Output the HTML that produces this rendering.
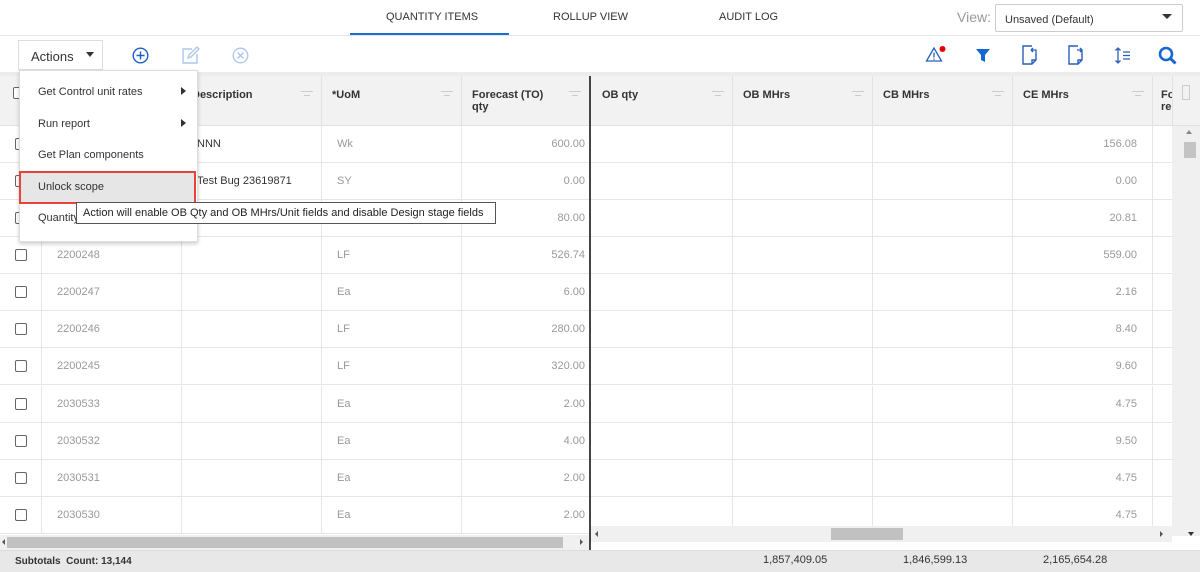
<!DOCTYPE html>
<html><head><meta charset="utf-8"><style>
*{box-sizing:border-box;margin:0;padding:0}
body{width:1200px;height:572px;overflow:hidden;background:#fff;font-family:"Liberation Sans",Arial,sans-serif;font-size:12px;color:#333;position:relative}
.a{position:absolute}
.tab{position:absolute;top:11px;font-size:11px;color:#333}
.hdr{position:absolute;top:76px;height:50px;background:#f2f2f2;border-bottom:1px solid #e2e2e2}
.hc{position:absolute;top:0;height:50px;border-right:1px solid #e2e2e2;font-weight:bold;font-size:11px;color:#333;padding:13px 10px}
.fi{position:absolute;right:8px;top:15px;width:12px;height:8px}
.fi:before,.fi:after{content:"";position:absolute;left:0;right:0;height:1px;background:#ccc}
.fi:before{top:0}.fi:after{top:4px;left:3px;right:3px}
.row{position:absolute;left:0;width:1172px;height:37px;border-bottom:1px solid #e6e6e6}
.c{position:absolute;top:0;height:37px;line-height:37px;font-size:11px;color:#999;border-right:1px solid #e6e6e6}
.cb{position:absolute;left:15px;top:12px;width:12px;height:12px;border:1px solid #666;border-radius:2px;background:#fff}
.num{text-align:right;padding-right:4px}
.mi{position:absolute;left:38px;font-size:11px;color:#333}
</style></head><body>
<div class="tab" style="left:386px">QUANTITY ITEMS</div>
<div class="tab" style="left:553px">ROLLUP VIEW</div>
<div class="tab" style="left:719px">AUDIT LOG</div>
<div class="a" style="left:0;top:35px;width:1200px;height:1px;background:#e6e6e6"></div>
<div class="a" style="left:350px;top:33px;width:159px;height:2px;background:#1a6fd1"></div>
<div class="a" style="left:957px;top:9px;font-size:14px;color:#999">View:</div>
<div class="a" style="left:995px;top:4px;width:188px;height:28px;border:1px solid #ccc;border-radius:2px;font-size:11px;padding:9px 9px;color:#333">Unsaved (Default)</div>
<div class="a" style="left:1162px;top:14px;width:0;height:0;border-left:5px solid transparent;border-right:5px solid transparent;border-top:5px solid #333"></div>
<div class="a" style="left:18px;top:40px;width:85px;height:30px;border:1px solid #ddd;font-size:13px;padding:8px 12px;color:#333">Actions</div>
<div class="a" style="left:86px;top:52px;border-left:4px solid transparent;border-right:4px solid transparent;border-top:5px solid #333"></div>
<svg class="a" style="left:132px;top:47px" width="17" height="17"><circle cx="8.5" cy="8.5" r="7.3" fill="none" stroke="#1a5fc8" stroke-width="1.4"/><path d="M8.5 4.5v8M4.5 8.5h8" stroke="#1a5fc8" stroke-width="1.4"/></svg>
<svg class="a" style="left:181px;top:46px" width="19" height="19"><path d="M11 3H2v14h14V8" fill="none" stroke="#a9c6ec" stroke-width="1.4"/><path d="M7 12l1-3 8-8 2 2-8 8z" fill="none" stroke="#a9c6ec" stroke-width="1.3"/></svg>
<svg class="a" style="left:232px;top:47px" width="17" height="17"><circle cx="8.5" cy="8.5" r="7.3" fill="none" stroke="#a9c6ec" stroke-width="1.3"/><path d="M5.5 5.5l6 6M11.5 5.5l-6 6" stroke="#a9c6ec" stroke-width="1.3"/></svg>
<svg class="a" style="left:925px;top:45px" width="22" height="20"><path d="M9 3L1.5 16h15z" fill="none" stroke="#2a5fb8" stroke-width="1.3"/><path d="M9 7.5v5M9 13.5v1.3" stroke="#2a5fb8" stroke-width="1.3"/><circle cx="17.5" cy="4" r="3" fill="#e60000"/></svg>
<svg class="a" style="left:975px;top:48px" width="16" height="15"><path d="M1 1h14l-5 6v7l-4-2V7z" fill="#1466d0"/></svg>
<svg class="a" style="left:1021px;top:45px" width="17" height="21"><path d="M11 1H2v18h9l4-4V9M15 15h-4v4" fill="none" stroke="#2a5fb8" stroke-width="1.4"/><path d="M10 5h5v5M10 5l2-2M10 5l2 2" fill="none" stroke="#2a5fb8" stroke-width="1.3"/></svg>
<svg class="a" style="left:1067px;top:45px" width="17" height="21"><path d="M11 1H2v18h9l4-4V9M15 15h-4v4" fill="none" stroke="#2a5fb8" stroke-width="1.4"/><path d="M10 5h5v5M15 5l-2-2M15 5l-2 2" fill="none" stroke="#2a5fb8" stroke-width="1.3"/></svg>
<svg class="a" style="left:1114px;top:47px" width="18" height="17"><path d="M4 1v15M1.5 3.5L4 1l2.5 2.5M1.5 13.5L4 16l2.5-2.5M9 5h7M9 8.5h7M9 12h7" fill="none" stroke="#2a5fb8" stroke-width="1.3"/></svg>
<svg class="a" style="left:1158px;top:46px" width="20" height="20"><circle cx="8" cy="8" r="6" fill="none" stroke="#1466d0" stroke-width="2.6"/><path d="M12.5 12.5l5 5" stroke="#1466d0" stroke-width="3"/></svg>
<div class="a" style="left:0;top:72px;width:1200px;height:4px;background:#ececec"></div>
<div class="hdr" style="left:0;width:1200px">
 <div class="hc" style="left:0;width:42px"><div class="cb" style="left:13px;top:11px"></div></div>
 <div class="hc" style="left:42px;width:140px"></div>
 <div class="hc" style="left:182px;width:140px">Description<span class="fi"></span></div>
 <div class="hc" style="left:322px;width:140px">*UoM<span class="fi"></span></div>
 <div class="hc" style="left:462px;width:128px">Forecast (TO)<br>qty<span class="fi"></span></div>
 <div class="hc" style="left:592px;width:141px">OB qty<span class="fi"></span></div>
 <div class="hc" style="left:733px;width:140px">OB MHrs<span class="fi"></span></div>
 <div class="hc" style="left:873px;width:140px">CB MHrs<span class="fi"></span></div>
 <div class="hc" style="left:1013px;width:140px">CE MHrs<span class="fi"></span></div>
 <div class="hc" style="left:1153px;width:20px;padding:13px 8px;overflow:hidden">Fo<br>re</div>
 <div class="a" style="left:1182px;top:9px;width:8px;height:15px;border:1px solid #ccc"></div>
</div>
<div class="row" style="top:126px"><div class="c" style="left:0;width:42px"><div class="cb"></div></div><div class="c" style="left:42px;width:140px;padding-left:15px"></div><div class="c" style="left:182px;width:140px;padding-left:15px;color:#333">NNN</div><div class="c" style="left:322px;width:140px;padding-left:15px">Wk</div><div class="c num" style="left:462px;width:128px">600.00</div><div class="c" style="left:592px;width:141px"></div><div class="c" style="left:733px;width:140px"></div><div class="c" style="left:873px;width:140px"></div><div class="c num" style="left:1013px;width:140px;padding-right:15px">156.08</div></div>
<div class="row" style="top:163px"><div class="c" style="left:0;width:42px"><div class="cb"></div></div><div class="c" style="left:42px;width:140px"></div><div class="c" style="left:182px;width:140px;padding-left:15px;color:#333">Test Bug 23619871</div><div class="c" style="left:322px;width:140px;padding-left:15px">SY</div><div class="c num" style="left:462px;width:128px">0.00</div><div class="c" style="left:592px;width:141px"></div><div class="c" style="left:733px;width:140px"></div><div class="c" style="left:873px;width:140px"></div><div class="c num" style="left:1013px;width:140px;padding-right:15px">0.00</div></div>
<div class="row" style="top:200px"><div class="c" style="left:0;width:42px"><div class="cb"></div></div><div class="c" style="left:42px;width:140px"></div><div class="c" style="left:182px;width:140px"></div><div class="c" style="left:322px;width:140px"></div><div class="c num" style="left:462px;width:128px">80.00</div><div class="c" style="left:592px;width:141px"></div><div class="c" style="left:733px;width:140px"></div><div class="c" style="left:873px;width:140px"></div><div class="c num" style="left:1013px;width:140px;padding-right:15px">20.81</div></div>
<div class="row" style="top:237px"><div class="c" style="left:0;width:42px"><div class="cb"></div></div><div class="c" style="left:42px;width:140px;padding-left:15px">2200248</div><div class="c" style="left:182px;width:140px"></div><div class="c" style="left:322px;width:140px;padding-left:15px">LF</div><div class="c num" style="left:462px;width:128px">526.74</div><div class="c" style="left:592px;width:141px"></div><div class="c" style="left:733px;width:140px"></div><div class="c" style="left:873px;width:140px"></div><div class="c num" style="left:1013px;width:140px;padding-right:15px">559.00</div></div>
<div class="row" style="top:274px"><div class="c" style="left:0;width:42px"><div class="cb"></div></div><div class="c" style="left:42px;width:140px;padding-left:15px">2200247</div><div class="c" style="left:182px;width:140px"></div><div class="c" style="left:322px;width:140px;padding-left:15px">Ea</div><div class="c num" style="left:462px;width:128px">6.00</div><div class="c" style="left:592px;width:141px"></div><div class="c" style="left:733px;width:140px"></div><div class="c" style="left:873px;width:140px"></div><div class="c num" style="left:1013px;width:140px;padding-right:15px">2.16</div></div>
<div class="row" style="top:311px"><div class="c" style="left:0;width:42px"><div class="cb"></div></div><div class="c" style="left:42px;width:140px;padding-left:15px">2200246</div><div class="c" style="left:182px;width:140px"></div><div class="c" style="left:322px;width:140px;padding-left:15px">LF</div><div class="c num" style="left:462px;width:128px">280.00</div><div class="c" style="left:592px;width:141px"></div><div class="c" style="left:733px;width:140px"></div><div class="c" style="left:873px;width:140px"></div><div class="c num" style="left:1013px;width:140px;padding-right:15px">8.40</div></div>
<div class="row" style="top:348px"><div class="c" style="left:0;width:42px"><div class="cb"></div></div><div class="c" style="left:42px;width:140px;padding-left:15px">2200245</div><div class="c" style="left:182px;width:140px"></div><div class="c" style="left:322px;width:140px;padding-left:15px">LF</div><div class="c num" style="left:462px;width:128px">320.00</div><div class="c" style="left:592px;width:141px"></div><div class="c" style="left:733px;width:140px"></div><div class="c" style="left:873px;width:140px"></div><div class="c num" style="left:1013px;width:140px;padding-right:15px">9.60</div></div>
<div class="row" style="top:386px"><div class="c" style="left:0;width:42px"><div class="cb"></div></div><div class="c" style="left:42px;width:140px;padding-left:15px">2030533</div><div class="c" style="left:182px;width:140px"></div><div class="c" style="left:322px;width:140px;padding-left:15px">Ea</div><div class="c num" style="left:462px;width:128px">2.00</div><div class="c" style="left:592px;width:141px"></div><div class="c" style="left:733px;width:140px"></div><div class="c" style="left:873px;width:140px"></div><div class="c num" style="left:1013px;width:140px;padding-right:15px">4.75</div></div>
<div class="row" style="top:423px"><div class="c" style="left:0;width:42px"><div class="cb"></div></div><div class="c" style="left:42px;width:140px;padding-left:15px">2030532</div><div class="c" style="left:182px;width:140px"></div><div class="c" style="left:322px;width:140px;padding-left:15px">Ea</div><div class="c num" style="left:462px;width:128px">4.00</div><div class="c" style="left:592px;width:141px"></div><div class="c" style="left:733px;width:140px"></div><div class="c" style="left:873px;width:140px"></div><div class="c num" style="left:1013px;width:140px;padding-right:15px">9.50</div></div>
<div class="row" style="top:460px"><div class="c" style="left:0;width:42px"><div class="cb"></div></div><div class="c" style="left:42px;width:140px;padding-left:15px">2030531</div><div class="c" style="left:182px;width:140px"></div><div class="c" style="left:322px;width:140px;padding-left:15px">Ea</div><div class="c num" style="left:462px;width:128px">2.00</div><div class="c" style="left:592px;width:141px"></div><div class="c" style="left:733px;width:140px"></div><div class="c" style="left:873px;width:140px"></div><div class="c num" style="left:1013px;width:140px;padding-right:15px">4.75</div></div>
<div class="row" style="top:497px"><div class="c" style="left:0;width:42px"><div class="cb"></div></div><div class="c" style="left:42px;width:140px;padding-left:15px">2030530</div><div class="c" style="left:182px;width:140px"></div><div class="c" style="left:322px;width:140px;padding-left:15px">Ea</div><div class="c num" style="left:462px;width:128px">2.00</div><div class="c" style="left:592px;width:141px"></div><div class="c" style="left:733px;width:140px"></div><div class="c" style="left:873px;width:140px"></div><div class="c num" style="left:1013px;width:140px;padding-right:15px">4.75</div></div>
<div class="a" style="left:589px;top:76px;width:2px;height:476px;background:#444"></div>
<div class="a" style="left:1172px;top:126px;width:28px;height:410px;background:#f0f0f0"></div>
<div class="a" style="left:1184px;top:142px;width:12px;height:16px;background:#c4c4c4"></div>
<div class="a" style="left:1186px;top:130px;border-left:3px solid transparent;border-right:3px solid transparent;border-bottom:4px solid #888"></div>
<div class="a" style="left:1188px;top:532px;border-left:3px solid transparent;border-right:3px solid transparent;border-top:4px solid #333"></div>
<div class="a" style="left:0;top:535px;width:589px;height:15px;background:#f0f0f0"></div>
<div class="a" style="left:7px;top:537px;width:556px;height:11px;background:#c1c1c1"></div>
<div class="a" style="left:2px;top:539px;border-top:3px solid transparent;border-bottom:3px solid transparent;border-right:3px solid #555"></div>
<div class="a" style="left:580px;top:539px;border-top:3px solid transparent;border-bottom:3px solid transparent;border-left:3px solid #555"></div>
<div class="a" style="left:591px;top:526px;width:581px;height:16px;background:#f0f0f0"></div>
<div class="a" style="left:831px;top:528px;width:72px;height:12px;background:#c1c1c1"></div>
<div class="a" style="left:595px;top:531px;border-top:3px solid transparent;border-bottom:3px solid transparent;border-right:3px solid #555"></div>
<div class="a" style="left:1160px;top:531px;border-top:3px solid transparent;border-bottom:3px solid transparent;border-left:3px solid #555"></div>
<div class="a" style="left:591px;top:542px;width:609px;height:8px;background:#fff"></div>
<div class="a" style="left:0;top:550px;width:1200px;height:22px;background:#e8e8e8;border-top:1px solid #ddd"></div>
<div class="a" style="left:15px;top:556px;font-size:10px;font-weight:bold;color:#333">Subtotals&nbsp;&nbsp;Count: 13,144</div>
<div class="a" style="left:763px;top:554px;font-size:11px;color:#333">1,857,409.05</div>
<div class="a" style="left:903px;top:554px;font-size:11px;color:#333">1,846,599.13</div>
<div class="a" style="left:1043px;top:554px;font-size:11px;color:#333">2,165,654.28</div>
<div class="a" style="left:19px;top:70px;width:179px;height:172px;background:#fff;border:1px solid #ddd;box-shadow:0 2px 4px rgba(0,0,0,.2)"></div>
<div class="mi" style="top:86px">Get Control unit rates</div>
<div class="a" style="left:181px;top:87px;border-top:4px solid transparent;border-bottom:4px solid transparent;border-left:5px solid #333"></div>
<div class="mi" style="top:118px">Run report</div>
<div class="a" style="left:181px;top:119px;border-top:4px solid transparent;border-bottom:4px solid transparent;border-left:5px solid #333"></div>
<div class="mi" style="top:149px">Get Plan components</div>
<div class="a" style="left:19px;top:171px;width:177px;height:33px;background:#e6e6e6;border:2px solid #e8413e"></div>
<div class="mi" style="top:181px">Unlock scope</div>
<div class="mi" style="top:212px">Quantity</div>
<div class="a" style="left:76px;top:202px;width:420px;height:22px;background:#fff;border:1px solid #555;font-size:11px;color:#222;padding:4px 6px;white-space:nowrap">Action will enable OB Qty and OB MHrs/Unit fields and disable Design stage fields</div>
</body></html>
